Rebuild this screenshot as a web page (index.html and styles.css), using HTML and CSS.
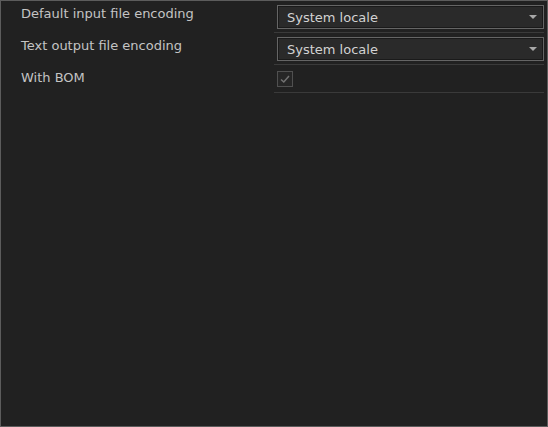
FILE: index.html
```html
<!DOCTYPE html>
<html lang="en">
<head>
    <meta charset="UTF-8">
    <title>Encoding</title>
    <link rel="stylesheet" href="styles.css">
</head>
<body>
    <div class="panel">
        <div class="row">
            <div class="label">Default input file encoding</div>
            <div class="value">
                <div class="combo">
                    <span>System locale</span>
                    <span class="arrow"></span>
                </div>
            </div>
        </div>
        <div class="row">
            <div class="label">Text output file encoding</div>
            <div class="value">
                <div class="combo">
                    <span>System locale</span>
                    <span class="arrow"></span>
                </div>
            </div>
        </div>
        <div class="row short">
            <div class="label">With BOM</div>
            <div class="value">
                <div class="check">
                    <svg width="12" height="12" viewBox="0 0 12 12">
                        <path d="M2 6.5 L4.8 9 L10 3" fill="none" stroke="#727272" stroke-width="1.5"/>
                    </svg>
                </div>
            </div>
        </div>
    </div>
</body>
</html>
```

FILE: styles.css
```css
html, body {
    margin: 0;
    padding: 0;
    background-color: #212121;
}

.panel {
    box-sizing: border-box;
    width: 548px;
    height: 427px;
    border: 1px solid #5c5c5c;
    background-color: #212121;
    font-family: "DejaVu Sans", Verdana, sans-serif;
    font-size: 13px;
    color: #c4c4c4;
}

.row {
    display: flex;
    height: 32px;
}

.row.short {
    height: 28px;
}

.label {
    width: 253px;
    padding: 5px 0 0 20px;
    line-height: 16px;
}

.value {
    flex: 1;
    margin-right: 3px;
    border-bottom: 1px solid #3a3a3a;
    padding: 4px 0 0 3px;
}

.combo {
    box-sizing: border-box;
    height: 24px;
    display: flex;
    align-items: center;
    justify-content: space-between;
    padding: 1px 6px 0 9px;
    background-color: #2a2a2a;
    border: 1px solid #656565;
    box-shadow: inset 0 0 0 1px #1a1a1a;
    color: #d2d2d2;
}

.arrow {
    width: 0;
    height: 0;
    border-left: 4px solid transparent;
    border-right: 4px solid transparent;
    border-top: 4px solid #a8a8a8;
    margin-top: -2px;
}

.check {
    box-sizing: border-box;
    width: 16px;
    height: 16px;
    margin-top: 2px;
    border: 1px solid #505050;
    background-color: #262626;
    display: flex;
    align-items: center;
    justify-content: center;
}
```
